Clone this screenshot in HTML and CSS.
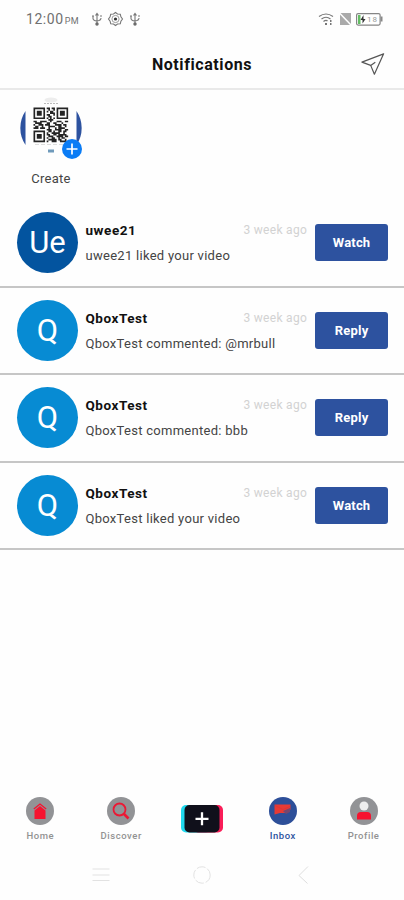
FILE: index.html
```html
<!DOCTYPE html>
<html lang="en">
<head>
<meta charset="utf-8">
<title>Notifications</title>
<link rel="stylesheet" href="styles.css">
</head>
<body>
<div class="phone">
  <div class="status">
    <span class="clock">12:00<small>PM</small></span>
    <svg class="status-left" width="50" height="16" viewBox="0 0 50 16" fill="none" stroke="#777" stroke-width="1.1">
      <path d="M6 3v10M2 5v2.5q0 2 4 2.5q4-.5 4-3M4.500 4.500L6 2.500l1.500 2"/><circle cx="6" cy="13" r="1.200" fill="#555"/><path d="M1 5h2M9 5h2"/>
      <path d="M24.500 1.500l2 1.500 2.800.2.600 2.600 1.600 2.200-1.600 2.200-.6 2.600-2.800.2-2 1.500-2-1.500-2.800-.2-.6-2.600L17.500 8l1.600-2.200.6-2.600 2.800-.2z"/><circle cx="24.500" cy="8" r="3.600" stroke-width=".7"/><circle cx="24.500" cy="8" r="1.600" fill="#333" stroke="none"/>
      <path d="M44 3v10M40 5v2.500q0 2 4 2.500q4-.5 4-3M42.500 4.500L44 2.500l1.500 2M39 5h2M47 5h2"/><circle cx="44" cy="13" r="1.200" fill="#555"/>
    </svg>
    <svg class="status-right" width="66" height="16" viewBox="0 0 66 16">
      <g fill="none" stroke="#777" stroke-width="1.200"><path d="M1 5.500Q8 .5 15 5.500M3.500 8Q8 4.500 12.500 8M5.500 10.500Q8 8.500 9.500 10"/></g>
      <path d="M7 12h2v2H7zM12 9h1.500v2H12zM12 12h1.500v2H12z" fill="#777"/>
      <path d="M22 2h11v12H22z" fill="#aaa"/><path d="M21.500 2L33 14" stroke="#fff" stroke-width="1.500"/>
      <rect x="38.600" y="2.600" width="23.500" height="11.500" rx="1.500" fill="#fff" stroke="#858585" stroke-width="1.200"/>
      <path d="M62.500 5.500h2v5h-2z" fill="#888"/><path d="M40 4h2.500v9H40z" fill="#63bd63"/><path d="M45.500 4L42.500 9h2v3.500L47.500 8h-2z" fill="#333"/>
      <text x="49" y="11" class="charge">18</text>
    </svg>
  </div>
  <header class="header">
    <h1>Notifications</h1>
    <svg class="send" width="24" height="24" viewBox="0 0 26 26" fill="none" stroke="#555" stroke-width="1.300" stroke-linejoin="round"><path d="M24.500 2L1 11l9.500 3.500L14.500 24zM10.500 14.500L15.500 11"/></svg>
  </header>
  <section class="story">
    <svg width="66" height="72" viewBox="0 0 66 72">
      <path d="M7.500 17A30.500 30.500 0 0 0 7.500 51zM58.500 17A30.500 30.500 0 0 1 58.500 51z" fill="#2d529f"/>
      <ellipse cx="33" cy="6" rx="6.500" ry="2.500" fill="#ededed"/>
      <path d="M26 9.500h14" stroke="#bbb" stroke-dasharray="2 1"/>
      <path d="M17 50.500h32" stroke="#ddd" stroke-dasharray="4 2"/>
      <path d="M30 55.500h6v3h-6z" fill="#6f9abb"/>
      <g transform="translate(15.500 13.500) scale(1.650)" stroke="#242424" fill="none">
        <path d="M.5 .5h6v6h-6zM14.500 .5h6v6h-6zM.5 14.500h6v6h-6z"/>
        <path fill="#242424" stroke="none" d="M2 2h3v3H2zM16 2h3v3h-3zM2 16h3v3H2z"/>
        <path d="M8 .5h2m1 0h2M9 1.500h1m2 0h1M8 2.500h1m1 0h2M10 3.500h3M8 4.500h2m2 0h1M9 5.500h2M8 6.500h1m1 0h1m1 0h1M9 7.500h3M0 8.500h2m2 0h4m2 0h1m3 0h3m2 0h2M1 9.500h4m3 0h2m2 0h2m3 0h1M0 10.500h1m2 0h3m1 0h3m3 0h4m1 0h2M1 11.500h2m2 0h1m3 0h4m2 0h2m2 0h1M0 12.500h3m1 0h3m2 0h1m3 0h1m1 0h4M8 13.500h3m2 0h4m2 0h2M9 14.500h2m1 0h1m2 0h2m1 0h2M8 15.500h1m2 0h5m2 0h1M8 16.500h2m2 0h2m1 0h5M9 17.500h3m2 0h4m1 0h2M8 18.500h1m2 0h2m2 0h1m1 0h2M9 19.500h5m1 0h2m2 0h1M8 20.500h1m2 0h3m2 0h4"/>
      </g>
      <circle cx="54" cy="55" r="10" fill="#0a7cf5"/><path d="M48.500 55h11M54 49.500v11" stroke="#fff" stroke-width="1.700"/>
    </svg>
    <span class="create">Create</span>
  </section>
  <main class="list">
    <article class="row"><div class="avatar navy">Ue</div><div class="info"><div class="line"><b>uwee21</b><time>3 week ago</time></div><p>uwee21 liked your video</p></div><button>Watch</button></article>
    <article class="row"><div class="avatar">Q</div><div class="info"><div class="line"><b>QboxTest</b><time>3 week ago</time></div><p>QboxTest commented: @mrbull</p></div><button>Reply</button></article>
    <article class="row"><div class="avatar">Q</div><div class="info"><div class="line"><b>QboxTest</b><time>3 week ago</time></div><p>QboxTest commented: bbb</p></div><button>Reply</button></article>
    <article class="row"><div class="avatar">Q</div><div class="info"><div class="line"><b>QboxTest</b><time>3 week ago</time></div><p>QboxTest liked your video</p></div><button>Watch</button></article>
  </main>
  <nav class="tabs">
    <a class="tab"><svg width="28" height="28" viewBox="0 0 28 28"><circle cx="14" cy="14" r="14" fill="#929396"/><path d="M8.500 13.500L14 9l5.500 4.500V22h-11z" fill="#f6132f"/><path d="M7.800 12L14 7l6.200 5" fill="none" stroke="#f6132f" stroke-width="1.300"/></svg>Home</a>
    <a class="tab"><svg width="28" height="28" viewBox="0 0 28 28"><circle cx="14" cy="14" r="14" fill="#929396"/><g fill="none" stroke="#ec1834"><circle cx="12.500" cy="12.500" r="6" stroke-width="1.800"/><path d="M17 17l4.500 4.500" stroke-width="2.600"/></g></svg>Discover</a>
    <a class="tab add"><svg width="42" height="28" viewBox="0 0 42 28"><rect width="30" height="27.500" rx="5" fill="#20d9ee"/><rect x="12" width="30" height="27.500" rx="5" fill="#fa1d58"/><rect x="3.500" width="35" height="27.500" rx="5" fill="#10101b"/><path d="M14.500 13.800h13M21 7.300v13" stroke="#fff" stroke-width="2.300"/></svg></a>
    <a class="tab active"><svg width="28" height="28" viewBox="0 0 28 28"><circle cx="14" cy="14" r="14" fill="#2d4f99"/><path d="M5.500 7.500h16v5l-4 3.500H11l-5.500 1.500z" fill="#e83a34"/><path d="M6 8.500l8 4 7-3" fill="none" stroke="#d83438" stroke-width=".7"/><path d="M14 14l7-3v4l-4 2z" fill="#75466f"/></svg>Inbox</a>
    <a class="tab"><svg width="28" height="28" viewBox="0 0 28 28"><circle cx="14" cy="14" r="14" fill="#929396"/><circle cx="14" cy="9" r="4.500" fill="#eee"/><path d="M7 22.500v-3.500q0-4 4-4h6q4 0 4 4v3.500z" fill="#f6132f"/></svg>Profile</a>
  </nav>
  <div class="system">
    <svg width="18" height="18" viewBox="0 0 18 18" fill="none" stroke="#e2e2e2" stroke-width="1.200"><path d="M.5 3h17M.5 9h17M.5 14.500h17"/></svg>
    <svg width="18" height="18" viewBox="0 0 18 18" fill="none" stroke="#e2e2e2" stroke-width="1"><circle cx="9" cy="9" r="8.200" stroke-dasharray="9 2"/></svg>
    <svg width="18" height="18" viewBox="0 0 18 18" fill="none" stroke="#dedede" stroke-width="1"><path d="M14 .5L5 9.500l8.500 8"/></svg>
  </div>
</div>
</body>
</html>
```
FILE: styles.css
```css
* { box-sizing: border-box; }
body { margin: 0; background: #fff; font-family: Roboto, sans-serif; color: #111; }
.phone { width: 404px; height: 900px; display: flex; flex-direction: column; overflow: hidden; background: #fefefe; }
.status { height: 38px; display: flex; align-items: center; padding: 0 20px 0 26px; }
.clock { width: 65px; font-size: 14px; letter-spacing: .55px; color: #707070; white-space: nowrap; }
.clock small { font-size: 9px; margin-left: 1px; }
.status-right { margin-left: auto; }
.charge { font-size: 8px; fill: #999; letter-spacing: 1px; }
.header { height: 52px; border-bottom: 2px solid #e9e9e9; display: grid; grid-template-columns: 60px 1fr 60px; align-items: center; }
.header h1 { grid-column: 2; margin: 2px 0 0; text-align: center; font-size: 16px; font-weight: 700; letter-spacing: .58px; }
.send { justify-self: center; margin-right: 3px; margin-top: 1px; }
.story { height: 110px; margin-left: 18px; padding-top: 4px; width: 66px; display: flex; flex-direction: column; align-items: center; }
.story svg { flex: none; }
.create { margin-top: 4px; font-size: 13px; line-height: 18px; letter-spacing: .3px; color: #444; }
.row { height: 87.600px; border-bottom: 2.500px solid #c6c6c6; padding: 0 16px 0 17px; display: flex; align-items: center; }
.avatar { width: 61px; height: 61px; border-radius: 50%; background: #078bd3; color: #fff; display: flex; align-items: center; justify-content: center; font-size: 31px; flex: none; }
.avatar.navy { background: #03549f; }
.info { width: 222px; margin: 0 8px 0 7.500px; padding-top: 1px; }
.line { display: flex; justify-content: space-between; align-items: center; line-height: 19px; }
.line b { font-size: 13.500px; letter-spacing: .55px; }
.line time { font-size: 12px; color: #d2d2d2; letter-spacing: .3px; }
.info p { margin: 6px 0 0; font-size: 13px; line-height: 19px; letter-spacing: .28px; color: #444; white-space: nowrap; }
.row button { width: 73px; height: 37px; border: 0; border-radius: 3px; background: #2d529f; color: #fff; padding: 0; font: 700 13px Roboto, sans-serif; letter-spacing: .2px; }
.tabs { margin-top: auto; height: 52px; display: flex; justify-content: space-between; padding: 0; }
.tab { width: 81px; display: flex; flex-direction: column; align-items: center; gap: 4px; color: #929292; font-size: 9.500px; font-weight: 500; line-height: 13px; letter-spacing: .55px; }
.tab.add { padding-top: 8px; }
.tab.active { color: #2d529f; }
.system { height: 51px; display: flex; justify-content: space-between; padding: 17px 92px; }
```
